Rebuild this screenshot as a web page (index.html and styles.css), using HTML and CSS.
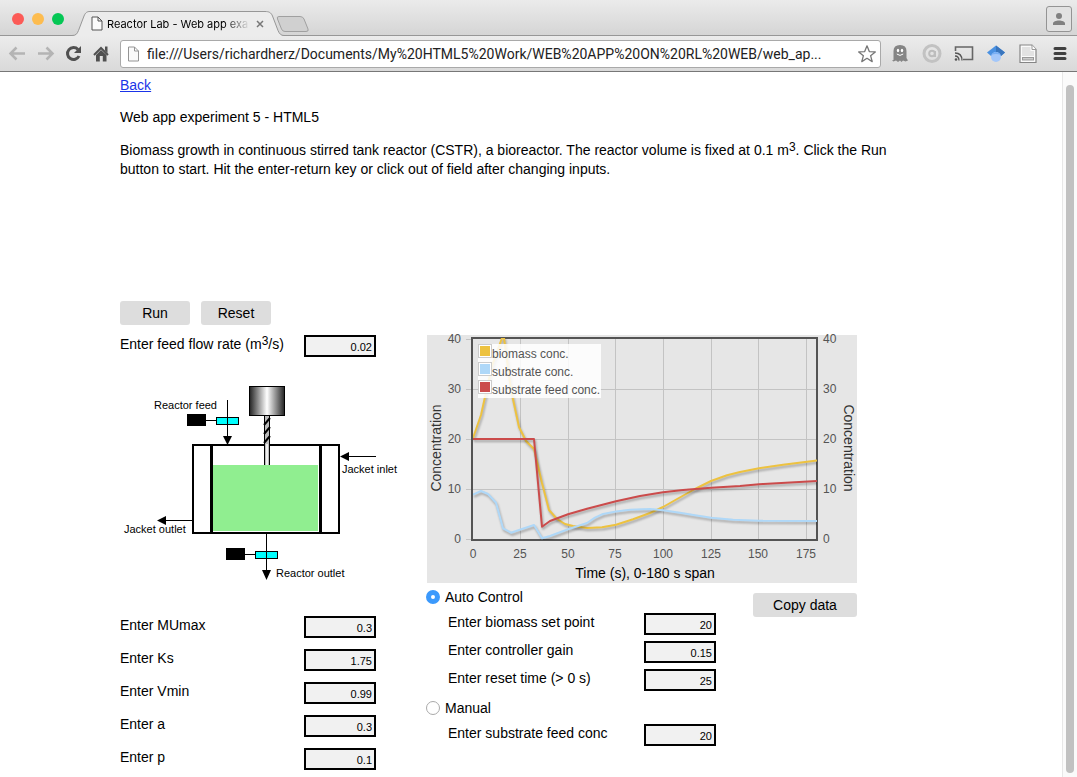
FILE: index.html
```html
<!DOCTYPE html>
<html lang="en">
<head>
<meta charset="utf-8">
<title>Reactor Lab - Web app example</title>
<link rel="stylesheet" href="styles.css">
</head>
<body>
<header class="browser">
  <div class="tabstrip">
    <div class="lights">
      <button class="light close" type="button" aria-label="Close window"></button>
      <button class="light minimize" type="button" aria-label="Minimize window"></button>
      <button class="light maximize" type="button" aria-label="Maximize window"></button>
    </div>
    <div class="tab">
      <svg class="tab-shape" viewBox="0 0 212 25" aria-hidden="true">
        <path d="M0 24.5 C4 24.500 5 23 6.500 19.500 L12 5 C13.500 1.500 15 .5 18 .5 H193 C197 .5 199 1.500 200.500 5 L206 19.500 C207.500 23 209 24.500 212 24.500 V25 H0Z" fill="#ececec"/>
        <path d="M0 24.500 C4 24.500 5 23 6.500 19.500 L12 5 C13.500 1.500 15 .5 18 .5 H193 C197 .5 199 1.500 200.500 5 L206 19.500 C207.500 23 209 24.500 212 24.500" fill="none" stroke="#979797"/>
      </svg>
      <svg class="tab-icon" viewBox="0 0 12 15" aria-hidden="true"><path d="M1 1H7L11 5V14H1Z M7 1V5H11" fill="#fafafa" stroke="#555"/></svg>
      <span class="tab-title">Reactor Lab - Web app exa</span>
      <button class="tab-close" type="button" aria-label="Close tab"><svg viewBox="0 0 8 8"><path d="M1 1L7 7M7 1L1 7" stroke="#777" stroke-width="1.5"/></svg></button>
    </div>
    <button class="new-tab" type="button" aria-label="New tab"><svg viewBox="0 0 34 17"><path d="M3 .5H24Q27 .5 28 3L32 13Q33 15.500 30 15.500H9Q6.500 15.500 5.500 13L1.500 3Q.5 .5 3 .5Z" fill="#d0d0d0" stroke="#a0a0a0"/></svg></button>
    <button class="profile" type="button" aria-label="Profile"><svg viewBox="0 0 14 14"><circle cx="7" cy="4" r="3" fill="#818181"/><path d="M1 13V11.500C1 9.500 4 8.500 7 8.500S13 9.500 13 11.500V13Z" fill="#818181"/></svg></button>
  </div>
  <div class="toolbar">
    <div class="nav">
      <button class="tool" type="button" aria-label="Back"><svg viewBox="0 0 20 20"><path d="M18 9.500H4M9.500 3.500L3.500 9.500L9.500 15.500" fill="none" stroke="#b4b4b4" stroke-width="2.500"/></svg></button>
      <button class="tool" type="button" aria-label="Forward"><svg viewBox="0 0 20 20"><path d="M3 9.500H17M11.500 3.500L17.500 9.500L11.500 15.500" fill="none" stroke="#b4b4b4" stroke-width="2.500"/></svg></button>
      <button class="tool" type="button" aria-label="Reload"><svg viewBox="0 0 20 20"><path d="M15 5.500A6 6 0 1 0 16 12" fill="none" stroke="#505050" stroke-width="3"/><path d="M18 2V9H11Z" fill="#505050"/></svg></button>
      <button class="tool" type="button" aria-label="Home"><svg viewBox="0 0 20 20"><path d="M3 11L10 4L17 11" fill="none" stroke="#505050" stroke-width="2"/><path d="M14 2.500H16.500V9L14 6.500Z M5 11L10 6L15.500 11V17.500H11.800V12H8.800V17.500H5Z" fill="#505050"/></svg></button>
    </div>
    <div class="omnibox">
      <svg class="page-icon" viewBox="0 0 13 16" aria-hidden="true"><path d="M1.500 1H7.500L11.500 5V15H1.500Z M7.500 1V5H11.500" fill="#fafafa" stroke="#949494"/></svg>
      <input class="address" type="text" aria-label="Address" value="file:///Users/richardherz/Documents/My%20HTML5%20Work/WEB%20APP%20ON%20RL%20WEB/web_ap...">
      <button class="star" type="button" aria-label="Bookmark"><svg viewBox="0 0 20 20"><path d="M10 1.800L12.300 7.600L18.300 7.900L13.600 11.700L15.200 17.600L10 14.300L4.800 17.600L6.400 11.700L1.700 7.900L7.700 7.600Z" fill="#fff" stroke="#777" stroke-width="1.300" stroke-linejoin="round"/></svg></button>
    </div>
    <div class="extensions">
      <button class="tool" type="button" aria-label="Ghost blocker"><svg viewBox="0 0 20 20"><path d="M3.500 16V7Q3.500 1 10 1T16.500 7V14L18 16.500L15.500 17.500L13 16.500L11.500 18L10 16.500L8 18L6 16.500L3.500 17.500L2 16.500Z" fill="#858585"/><ellipse cx="8" cy="6.500" rx="1.200" ry="1.700" fill="#fff"/><ellipse cx="12" cy="6.500" rx="1.200" ry="1.700" fill="#fff"/><path d="M6.800 10Q10 12.800 13.200 10" fill="none" stroke="#fff"/></svg></button>
      <button class="tool" type="button" aria-label="Privacy"><svg viewBox="0 0 20 20"><circle cx="10" cy="9.500" r="8" fill="none" stroke="#c2c2c2" stroke-width="3"/><circle cx="10" cy="9.500" r="2.800" fill="none" stroke="#bdbdbd" stroke-width="2"/><path d="M13 7V13" stroke="#bdbdbd" stroke-width="2"/></svg></button>
      <button class="tool" type="button" aria-label="Cast"><svg viewBox="0 0 20 20"><path d="M1.500 7V3H18.500V15.500H9" fill="none" stroke="#666" stroke-width="1.600"/><path d="M1 9Q8 9 8 16.500M1 12Q5 12 5 16.500" fill="none" stroke="#555" stroke-width="1.300"/><circle cx="2" cy="15.500" r="1.300" fill="#555"/></svg></button>
      <button class="tool" type="button" aria-label="Scholar"><svg viewBox="0 0 20 20"><path d="M10 1.500L1 8.500L5 12H15L19 8.500Z" fill="#4a91e2"/><path d="M10 1.500L19 8.500L15 12L10 8Z" fill="#3975bd"/><circle cx="10" cy="13" r="5" fill="#a3c7fa"/><path d="M5 11Q10 5 15 11Q10 9 5 11Z" fill="#78aff4"/></svg></button>
      <button class="tool" type="button" aria-label="Document tools"><svg viewBox="0 0 20 20"><path d="M2 1H14L18 5.500V18.500H2Z" fill="#fafafa" stroke="#858585" stroke-width="1.200"/><path d="M14 1V5.500H18" fill="#fff" stroke="#999"/><path d="M4 3H12.500V7H16V12H4Z" fill="#e2e2e2"/><rect x="4.500" y="13.500" width="11" height="2.500" fill="#ccc" stroke="#999"/></svg></button>
      <button class="tool" type="button" aria-label="Menu"><svg viewBox="0 0 20 20"><path d="M5 4.500H15M5 9.500H15M5 14.500H15" stroke="#404040" stroke-width="3" stroke-linecap="round"/></svg></button>
    </div>
  </div>
</header>

<div class="viewport">
  <main class="page">
    <a class="back" href="#">Back</a>
    <p class="heading">Web app experiment 5 - HTML5</p>
    <p class="intro">Biomass growth in continuous stirred tank reactor (CSTR), a bioreactor. The reactor volume is fixed at 0.1 m<sup>3</sup>. Click the Run button to start. Hit the enter-return key or click out of field after changing inputs.</p>

    <div class="actions">
      <button class="button" type="button">Run</button>
      <button class="button" type="button">Reset</button>
    </div>

    <div class="columns">
      <section class="reactor">
        <div class="field">
          <label for="feed-flow">Enter feed flow rate (m<sup>3</sup>/s)</label>
          <input id="feed-flow" type="text" value="0.02">
        </div>

        <svg class="diagram" viewBox="120 380 280 204" role="img" aria-label="Stirred tank reactor">
          <defs>
            <linearGradient id="metal"><stop offset="0" stop-color="#222"/><stop offset=".5" stop-color="#fff"/><stop offset="1" stop-color="#222"/></linearGradient>
          </defs>
          <rect x="193" y="445" width="146" height="88" fill="#fff" stroke="#000" stroke-width="2"/>
          <path d="M211.500 445V533M320.500 445V533" stroke="#000" stroke-width="3"/>
          <rect x="213" y="465" width="105" height="66" fill="#90ee90"/>
          <rect x="249.500" y="386.500" width="35" height="29" fill="url(#metal)" stroke="#000"/>
          <rect x="264" y="416" width="6" height="49" fill="#bbb"/>
          <path d="M264.500 416V465M269.500 416V465" stroke="#000"/>
          <path d="M264 425L270 418M264 434L270 427M264 443L270 436" stroke="#000" stroke-width="2"/>
          <path d="M267 444V465" stroke="#eee" stroke-width="2"/>
          <rect x="187" y="414" width="19" height="12"/>
          <rect x="216.500" y="417.500" width="22" height="7" fill="#0ff" stroke="#000"/>
          <path d="M206 420.500H216M227.500 400V438" stroke="#000"/>
          <path d="M223 436H232L227.500 445Z"/>
          <path d="M348 456.500H376M165 520.500H192M266.500 534V572M245 554.500H255" stroke="#000"/>
          <path d="M340 456.500L349 452V461ZM157 520.500L166 516V525ZM262 570H271L266.500 580Z"/>
          <rect x="226" y="548" width="19" height="12"/>
          <rect x="255.500" y="551.500" width="22" height="7" fill="#0ff" stroke="#000"/>
          <path d="M266.500 550V560" stroke="#000"/>
          <text x="154" y="409">Reactor feed</text>
          <text x="342" y="473">Jacket inlet</text>
          <text x="124" y="533">Jacket outlet</text>
          <text x="276" y="577">Reactor outlet</text>
        </svg>

        <div class="params">
          <div class="field"><label for="mumax">Enter MUmax</label><input id="mumax" type="text" value="0.3"></div>
          <div class="field"><label for="ks">Enter Ks</label><input id="ks" type="text" value="1.75"></div>
          <div class="field"><label for="vmin">Enter Vmin</label><input id="vmin" type="text" value="0.99"></div>
          <div class="field"><label for="a">Enter a</label><input id="a" type="text" value="0.3"></div>
          <div class="field"><label for="p">Enter p</label><input id="p" type="text" value="0.1"></div>
        </div>
      </section>

      <section class="results">
        <svg class="chart" viewBox="427 335 430 248" role="img" aria-label="Concentration against time">
          <defs><clipPath id="plot"><rect x="473" y="338" width="344" height="202"/></clipPath></defs>
          <rect x="427" y="335" width="430" height="248" fill="#e6e6e6"/>
          <path d="M466 339.500H472M466 389.500H817M466 439.500H817M466 489.500H817M466 539.500H472M520.500 339V540M568.500 339V540M615.500 339V540M663.500 339V540M711.500 339V540M758.500 339V540M806.500 339V540" stroke="#c3c3c3"/>
          <rect x="472" y="338" width="345" height="202" fill="none" stroke="#545454" stroke-width="2"/>
          <g class="series" clip-path="url(#plot)">
            <polyline stroke="#edc240" points="473,438 481,415 485,397 492,366 502,338 504,338 511,390 519,427 526,441 534,449 542,483 549,510 557,519 565,524 573,526 587,528 602,527.300 616,524.700 633,519.300 650,513 663,507 678,498.500 695,489 711,481 727,475.300 740,472 759,468.300 783,464.700 817,460.500"/>
            <polyline stroke="#afd8f8" points="473,494.700 481,491 488,494 496,502.700 503,528.300 511,532.700 519,530 534,525 542,538.300 550,536 568,529.300 587,523 595,517.700 603,514 616,511.500 630,509.700 650,509 663,510.300 683,513.300 695,515.300 711,517.700 733,519.700 759,520.700 817,521"/>
            <polyline stroke="#cb4b4b" points="473,439 534,439 542,526.700 550,521 568,514.300 587,508.700 616,501.300 640,496 663,492.300 683,490 711,487.700 740,486 759,484.300 817,481"/>
          </g>
          <g class="ticks left-ticks"><text x="461" y="343">40</text><text x="461" y="393">30</text><text x="461" y="443">20</text><text x="461" y="493">10</text><text x="461" y="543">0</text></g>
          <g class="ticks"><text x="823" y="343">40</text><text x="823" y="393">30</text><text x="823" y="443">20</text><text x="823" y="493">10</text><text x="823" y="543">0</text></g>
          <g class="ticks x-ticks"><text x="473" y="558">0</text><text x="520" y="558">25</text><text x="568" y="558">50</text><text x="615" y="558">75</text><text x="663" y="558">100</text><text x="711" y="558">125</text><text x="758" y="558">150</text><text x="806" y="558">175</text></g>
          <rect x="478" y="344" width="123" height="54" fill="#fff" fill-opacity=".85"/>
          <g stroke="#ccc" fill="#fff"><rect x="478.500" y="344.500" width="13" height="13"/><rect x="478.500" y="362.500" width="13" height="13"/><rect x="478.500" y="380.500" width="13" height="13"/></g>
          <rect x="480" y="346" width="10" height="10" fill="#edc240"/>
          <rect x="480" y="364" width="10" height="10" fill="#afd8f8"/>
          <rect x="480" y="382" width="10" height="10" fill="#cb4b4b"/>
          <g class="ticks"><text x="492" y="358">biomass conc.</text><text x="492" y="376">substrate conc.</text><text x="492" y="394">substrate feed conc.</text></g>
          <text class="axis" transform="translate(441 448) rotate(-90)">Concentration</text>
          <text class="axis" transform="translate(844 448) rotate(90)">Concentration</text>
          <text class="time-axis" x="645" y="578">Time (s), 0-180 s span</text>
        </svg>

        <div class="controls">
          <div class="modes">
            <label class="mode"><input type="radio" name="mode" checked>Auto Control</label>
            <div class="settings">
              <div class="field"><label for="set-point">Enter biomass set point</label><input id="set-point" type="text" value="20"></div>
              <div class="field"><label for="gain">Enter controller gain</label><input id="gain" type="text" value="0.15"></div>
              <div class="field"><label for="reset-time">Enter reset time (&gt; 0 s)</label><input id="reset-time" type="text" value="25"></div>
            </div>
            <label class="mode manual"><input type="radio" name="mode">Manual</label>
            <div class="settings">
              <div class="field"><label for="feed-conc">Enter substrate feed conc</label><input id="feed-conc" type="text" value="20"></div>
            </div>
          </div>
          <button class="button copy" type="button">Copy data</button>
        </div>
      </section>
    </div>
  </main>
  <div class="scrollbar" aria-hidden="true"><div class="thumb"></div></div>
</div>
</body>
</html>
```
FILE: styles.css
```css
* { box-sizing: border-box; }

body {
  margin: 0;
  min-height: 100vh;
  display: flex;
  flex-direction: column;
  background: #fff;
  color: #000;
  font: 14px/18px "Liberation Sans", Arial, sans-serif;
}

button {
  margin: 0;
  padding: 0;
  border: 0;
  background: none;
  color: inherit;
  font: inherit;
}

svg { display: block; }

p { margin: 0; }

sup {
  font-size: 12px;
  line-height: 0;
  vertical-align: 4px;
}

/* Browser window */
.tabstrip {
  display: flex;
  align-items: flex-end;
  height: 36px;
  background: linear-gradient(#ebebeb, #d5d5d5);
  border-bottom: 1px solid #979797;
}

.lights {
  display: flex;
  gap: 8px;
  padding: 0 8px 10px 12px;
}

.light {
  width: 12px;
  height: 12px;
  border-radius: 50%;
}

.close { background: #fc5b57; }
.minimize { background: #fdbc4f; }
.maximize { background: #05c755; }

.tab {
  position: relative;
  display: flex;
  align-items: center;
  width: 212px;
  height: 25px;
  margin-bottom: -1px;
  padding: 0 20px 0 19px;
}

.tab-shape {
  position: absolute;
  inset: 0;
  width: 100%;
  height: 100%;
}

.tab-icon {
  position: relative;
  flex: none;
  width: 12px;
  height: 15px;
}

.tab-title {
  position: relative;
  flex: 1;
  margin: 0 6px 0 4px;
  overflow: hidden;
  white-space: nowrap;
  font: 11px/16px Inter, sans-serif;
  -webkit-mask-image: linear-gradient(90deg, #000 82%, transparent);
  mask-image: linear-gradient(90deg, #000 82%, transparent);
}

.tab-close {
  position: relative;
  width: 8px;
  height: 8px;
}

.new-tab {
  width: 34px;
  height: 17px;
  margin: 0 0 2px -8px;
}

.profile {
  display: grid;
  place-items: center;
  width: 26px;
  height: 26px;
  margin: 0 5px 3px auto;
  border: 1px solid #949494;
  border-radius: 3px;
  background: #e2e2e2;
}

.profile svg { width: 14px; }

.toolbar {
  display: flex;
  align-items: center;
  gap: 9px;
  height: 36px;
  padding: 0 7px;
  background: linear-gradient(#ececec, #d9d9d9);
  border-bottom: 1px solid #777;
}

.nav {
  display: flex;
  gap: 8px;
}

.extensions {
  display: flex;
  gap: 12px;
}

.tool, .star {
  flex: none;
  width: 20px;
  height: 20px;
}

.omnibox {
  flex: 1;
  display: flex;
  align-items: center;
  min-width: 0;
  height: 28px;
  padding: 0 3px 0 6px;
  background: #fff;
  border: 1px solid #a9a9a9;
  border-radius: 3px;
}

.page-icon {
  flex: none;
  width: 13px;
  height: 16px;
}

.address {
  flex: 1;
  min-width: 0;
  padding: 0 0 0 7px;
  border: 0;
  outline: 0;
  background: none;
  color: #222;
  font: 14px/20px Roboto, sans-serif;
}

/* Page */
.viewport {
  flex: 1;
  display: flex;
}

.page {
  flex: 1;
  padding: 4px 20px 6px 120px;
}

.back { color: #1a34e8; }

.heading { margin-top: 14px; }

.intro {
  max-width: 800px;
  margin-top: 15px;
  line-height: 19px;
}

.actions {
  display: flex;
  gap: 11px;
  margin-top: 122px;
}

.button {
  min-width: 70px;
  height: 24px;
  padding: 0 15px;
  border-radius: 3px;
  background: #ddd;
}

.columns {
  display: flex;
  align-items: flex-start;
  gap: 27px;
  margin-top: 10px;
}

.reactor { width: 280px; }

.results { width: 430px; }

.field {
  display: flex;
  justify-content: space-between;
  align-items: flex-start;
}

.field input {
  width: 72px;
  height: 22px;
  padding: 1px 2px 0;
  border: 2px solid #000;
  border-radius: 0;
  background: #f1f1f1;
  font: 11px/16px "Liberation Sans", Arial, sans-serif;
  text-align: right;
}

.reactor .field { padding-right: 24px; }

.diagram {
  width: 100%;
  margin-top: 23px;
}

.diagram text { font-size: 11px; }

.params {
  display: grid;
  gap: 11px;
  margin-top: 32px;
}

.chart {
  width: 100%;
  overflow: visible;
}

.series polyline {
  fill: none;
  stroke-width: 2;
  stroke-linejoin: round;
  filter: drop-shadow(1px 2px 1px rgba(0, 0, 0, .3));
}

.ticks {
  fill: #545454;
  font-size: 12px;
}

.left-ticks { text-anchor: end; }

.x-ticks, .axis, .time-axis { text-anchor: middle; }

.axis {
  fill: #333;
  font-size: 14px;
}

.controls {
  display: flex;
  justify-content: space-between;
  align-items: flex-start;
  padding-top: 5px;
}

.copy {
  margin-top: 5px;
  min-width: 104px;
}

.modes { width: 289px; }

.mode {
  display: flex;
  align-items: center;
  gap: 5px;
}

.mode input {
  appearance: none;
  width: 14px;
  height: 14px;
  margin: 0 0 0 -1px;
  border: 1px solid #aaa;
  border-radius: 50%;
  background: #fff;
}

.mode input:checked {
  border: 5px solid #3b99fc;
}

.settings {
  display: grid;
  gap: 6px;
  margin-top: 7px;
  padding-left: 21px;
}

.manual { margin-top: 8px; }

/* Page scrollbar */
.scrollbar {
  display: flex;
  justify-content: center;
  width: 15px;
  padding: 13px 0 4px;
  background: #fafafa;
  border-left: 1px solid #e7e7e7;
}

.thumb {
  width: 8px;
  border-radius: 4px;
  background: #c1c1c1;
}
```
